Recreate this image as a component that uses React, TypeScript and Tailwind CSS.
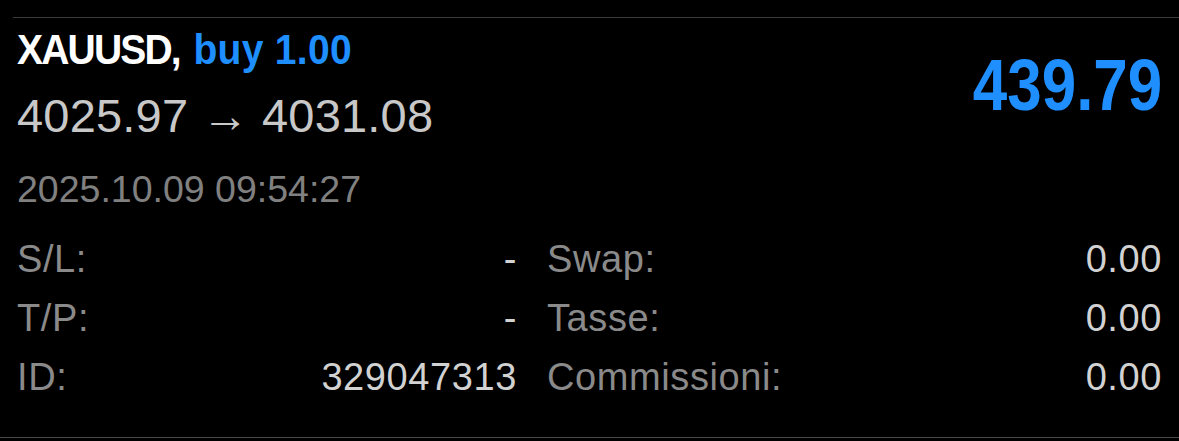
import React from 'react';

const rows = [
  { l1: 'S/L:', v1: '-', l2: 'Swap:', v2: '0.00' },
  { l1: 'T/P:', v1: '-', l2: 'Tasse:', v2: '0.00' },
  { l1: 'ID:', v1: '329047313', l2: 'Commissioni:', v2: '0.00' },
];

export default function App() {
  return (
    <div className="flex h-[441px] w-[1179px] flex-col overflow-hidden bg-black font-['Liberation_Sans',Arial,sans-serif]">
      {/* top separator */}
      <div className="ml-[13px] mt-[17px] h-px bg-[#3a3a3c]" />

      <div className="flex flex-col pl-[17px] pr-[17px]">
        {/* header */}
        <div className="mt-[8px] flex items-start justify-between">
          <div className="flex flex-col">
            <div className="origin-left scale-x-[0.93] text-[42px] font-bold leading-[48px] whitespace-nowrap">
              <span className="tracking-[-2px] text-white">XAUUSD,</span>{' '}
              <span className="ml-[3px] tracking-[0.3px] text-[#1f8fff]">buy 1.00</span>
            </div>
            <div className="mt-[14px] text-[47px] leading-[56px] tracking-[0.2px] text-[#c8c8c8] whitespace-nowrap">
              4025.97 → 4031.08
            </div>
          </div>
          <div className="mt-[23px] origin-right scale-x-[0.86] text-[72px] font-bold leading-none text-[#1f8fff]">
            439.79
          </div>
        </div>

        {/* open time */}
        <div className="mt-[23px] text-[37.5px] leading-[44px] text-[#808080]">
          2025.10.09 09:54:27
        </div>

        {/* details */}
        <div className="mt-[19px] flex flex-col">
          {rows.map((r) => (
            <div key={r.l1} className="flex h-[59px] items-center text-[38px] leading-[59px] tracking-[0.6px]">
              <div className="flex w-[500px] justify-between">
                <span className="text-[#8a8a8a]">{r.l1}</span>
                <span className="text-[#d2d2d2]">{r.v1}</span>
              </div>
              <div className="ml-[30px] flex flex-1 justify-between">
                <span className="text-[#8a8a8a]">{r.l2}</span>
                <span className="text-[#d2d2d2]">{r.v2}</span>
              </div>
            </div>
          ))}
        </div>
      </div>

      {/* bottom separator */}
      <div className="mt-auto mb-[3px] h-px bg-[#48484a]" />
    </div>
  );
}
